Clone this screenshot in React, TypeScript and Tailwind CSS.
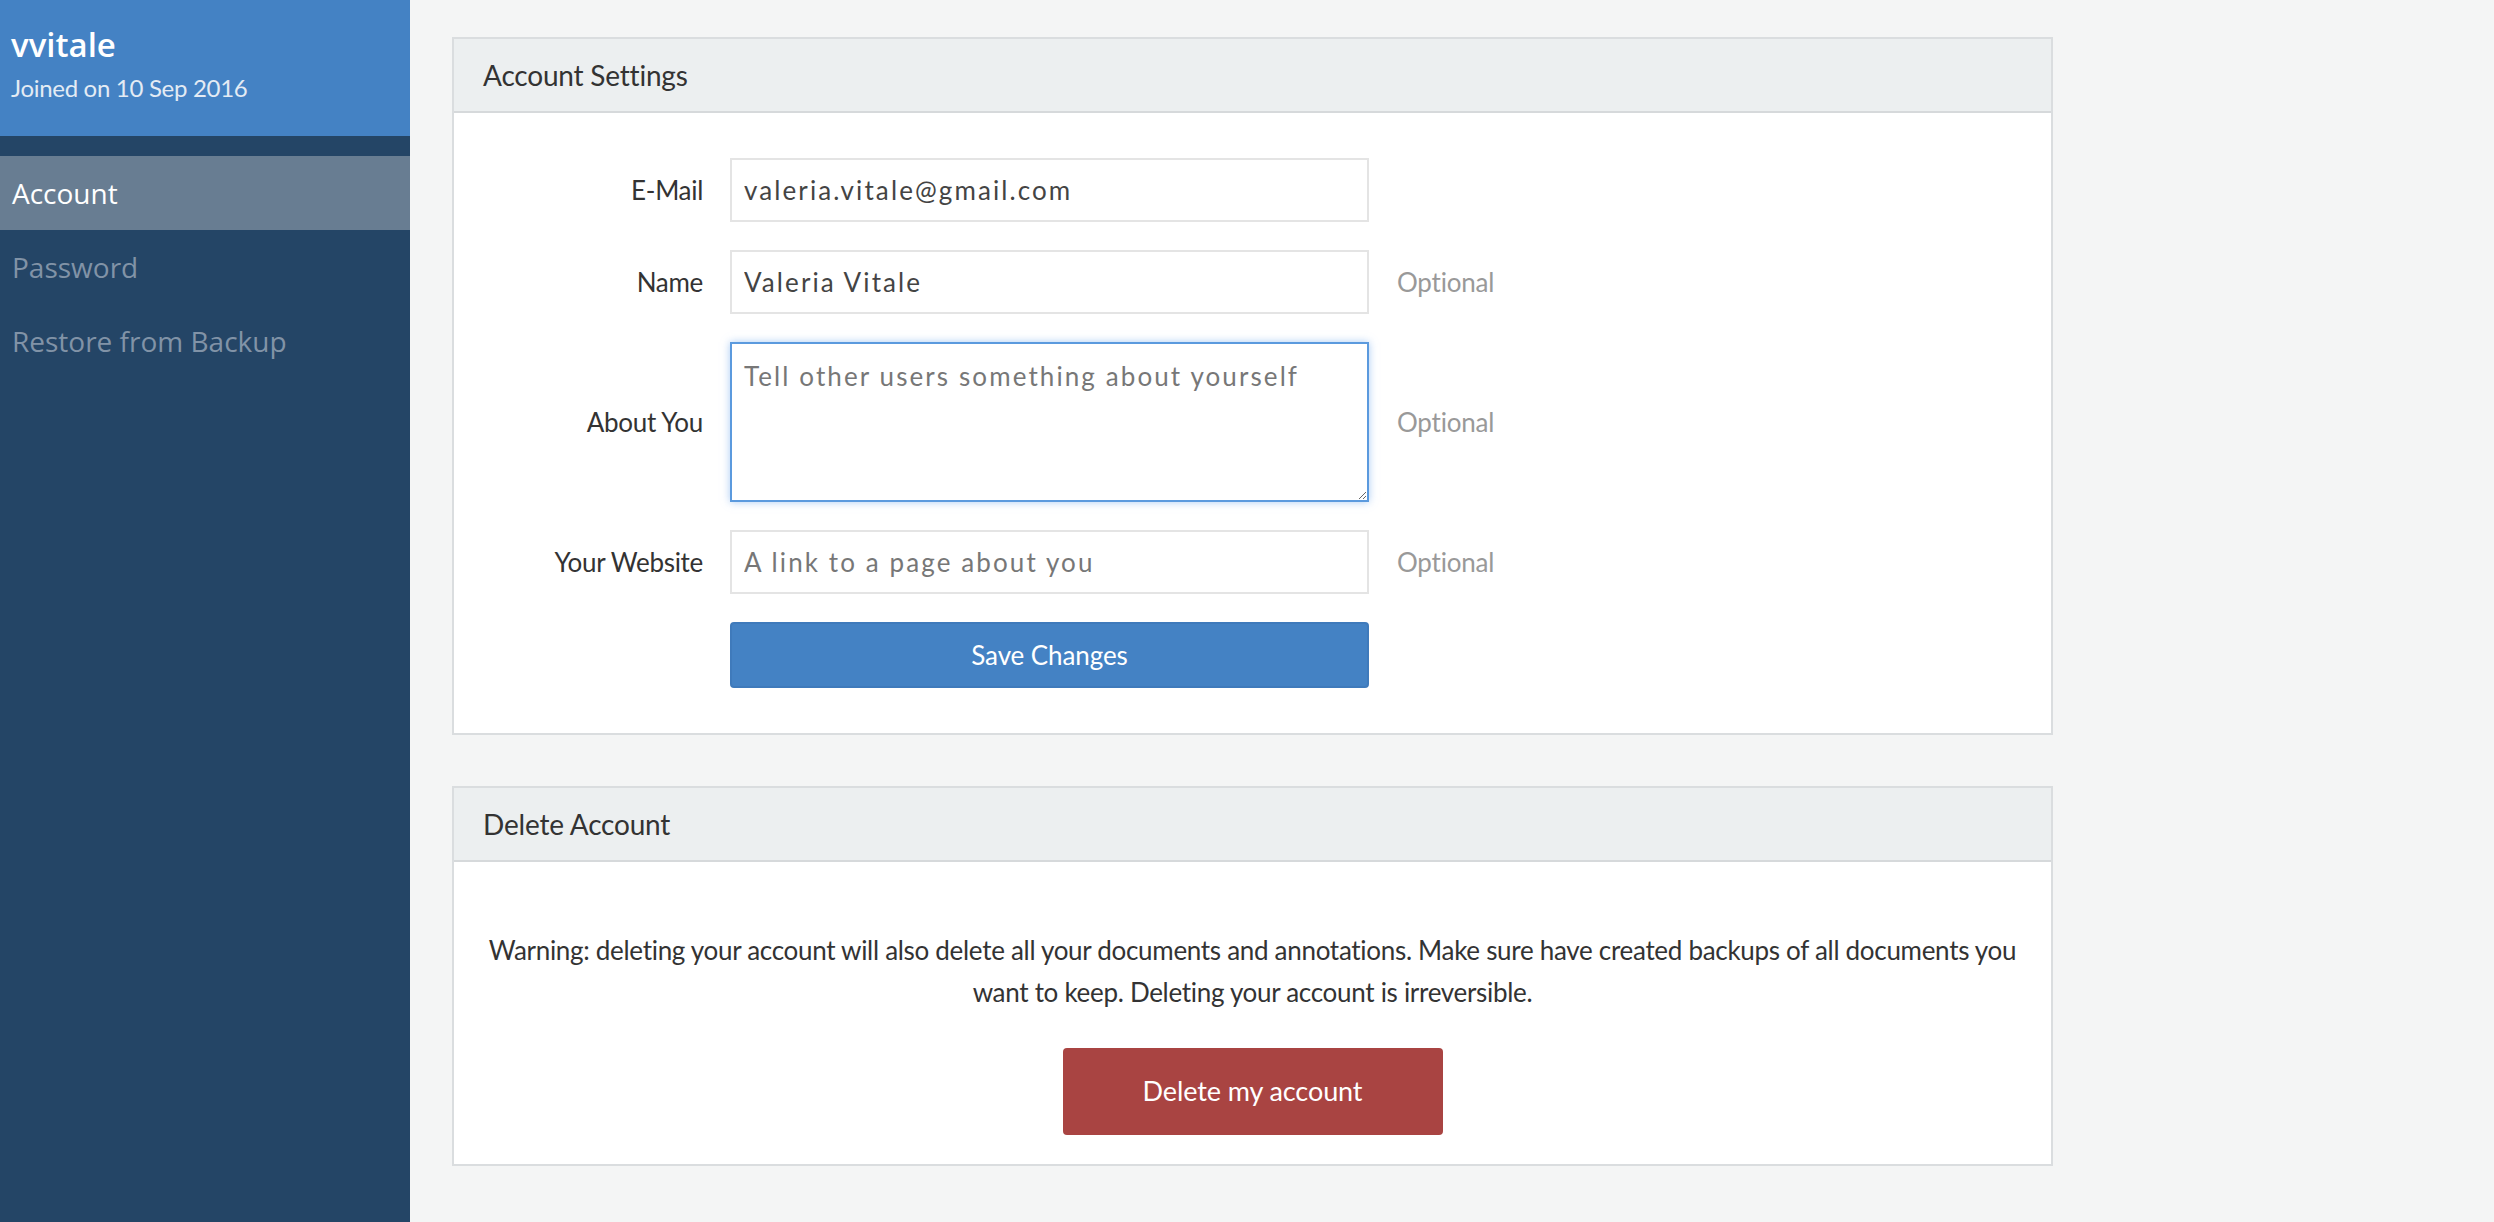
import type { ReactNode } from 'react';

const NARROW = "font-['Lato',sans-serif]";
const OPEN = "font-['Open_Sans',sans-serif]";

function Panel({ title, children }: { title: string; children: ReactNode }) {
  return (
    <section className="w-[1601px] border-2 border-[#dadddf] bg-white">
      <header
        className={`${NARROW} flex h-[74px] items-center border-b-2 border-[#d6d9db] bg-[#eceff0] px-[29px] text-[28px] tracking-[-0.2px] text-[#333]`}
      >
        {title}
      </header>
      {children}
    </section>
  );
}

interface FieldRowProps {
  label: string;
  optional?: boolean;
  children: ReactNode;
}

function FieldRow({ label, optional, children }: FieldRowProps) {
  return (
    <div className="flex items-center">
      <label className={`${NARROW} mr-[27px] w-[249px] text-right text-[26px] tracking-[-0.3px] text-[#333]`}>
        {label}
      </label>
      {children}
      {optional && (
        <span className={`${NARROW} ml-[28px] text-[26px] tracking-[-0.2px] text-[#999]`}>Optional</span>
      )}
    </div>
  );
}

const inputCls = `${NARROW} h-[64px] w-[639px] border-2 border-[#e4e4e4] bg-white px-[12px] text-[26px] tracking-[2.1px] text-[#444] outline-none placeholder:text-[#777]`;

export default function App() {
  return (
    <div className="flex min-h-screen bg-[#f4f5f5]">
      {/* Sidebar */}
      <aside className="min-h-screen w-[410px] shrink-0 bg-[#244566]">
        <div className="h-[136px] bg-[#4482c4] px-[11px] pt-[25px]">
          <div className={`${OPEN} text-[33px] font-semibold leading-[40px] text-white`}>vvitale</div>
          <div className={`${NARROW} mt-[5px] text-[24px] leading-[36px] tracking-[-0.3px] text-[#e3ebf4]`}>
            Joined on 10 Sep 2016
          </div>
        </div>
        <nav className={`${OPEN} pt-[20px] text-[28px]`}>
          <a className="flex h-[74px] items-center bg-[#687d92] pl-[12px] text-white">Account</a>
          <a className="flex h-[74px] items-center pl-[12px] text-[#8193a7]">Password</a>
          <a className="flex h-[74px] items-center pl-[12px] text-[#8193a7]">Restore from Backup</a>
        </nav>
      </aside>

      {/* Main */}
      <main className="flex-1 pl-[42px] pt-[37px]">
        <Panel title="Account Settings">
          <div className="flex flex-col gap-[28px] pb-[45px] pt-[45px]">
            <FieldRow label="E-Mail">
              <input className={inputCls} defaultValue="valeria.vitale@gmail.com" />
            </FieldRow>
            <FieldRow label="Name" optional>
              <input className={inputCls} defaultValue="Valeria Vitale" />
            </FieldRow>
            <FieldRow label="About You" optional>
              <textarea
                className={`${NARROW} h-[160px] w-[639px] border-2 border-[#5b9ade] bg-white px-[12px] pt-[13px] text-[26px] tracking-[2.1px] text-[#444] shadow-[0_0_8px_rgba(102,163,233,0.55)] outline-none placeholder:text-[#777]`}
                placeholder="Tell other users something about yourself"
              />
            </FieldRow>
            <FieldRow label="Your Website" optional>
              <input className={inputCls} placeholder="A link to a page about you" />
            </FieldRow>
            <div className="flex pl-[276px]">
              <button
                className={`${NARROW} h-[66px] w-[639px] rounded-[4px] border-2 border-[#3f7abb] bg-[#4482c4] text-[26px] tracking-[-0.1px] text-white`}
              >
                Save Changes
              </button>
            </div>
          </div>
        </Panel>

        <div className="mt-[51px]">
          <Panel title="Delete Account">
            <div className="flex flex-col items-center px-[20px] pb-[29px] pt-[67px]">
              <p className={`${NARROW} text-center text-[26px] leading-[42px] tracking-[-0.3px] text-[#333]`}>
                Warning: deleting your account will also delete all your documents and annotations. Make sure have
                created backups of all documents you
                <br />
                want to keep. Deleting your account is irreversible.
              </p>
              <button
                className={`${NARROW} mt-[35px] h-[87px] w-[380px] rounded-[4px] bg-[#a94442] text-[27px] tracking-[-0.1px] text-white`}
              >
                Delete my account
              </button>
            </div>
          </Panel>
        </div>
      </main>
    </div>
  );
}
